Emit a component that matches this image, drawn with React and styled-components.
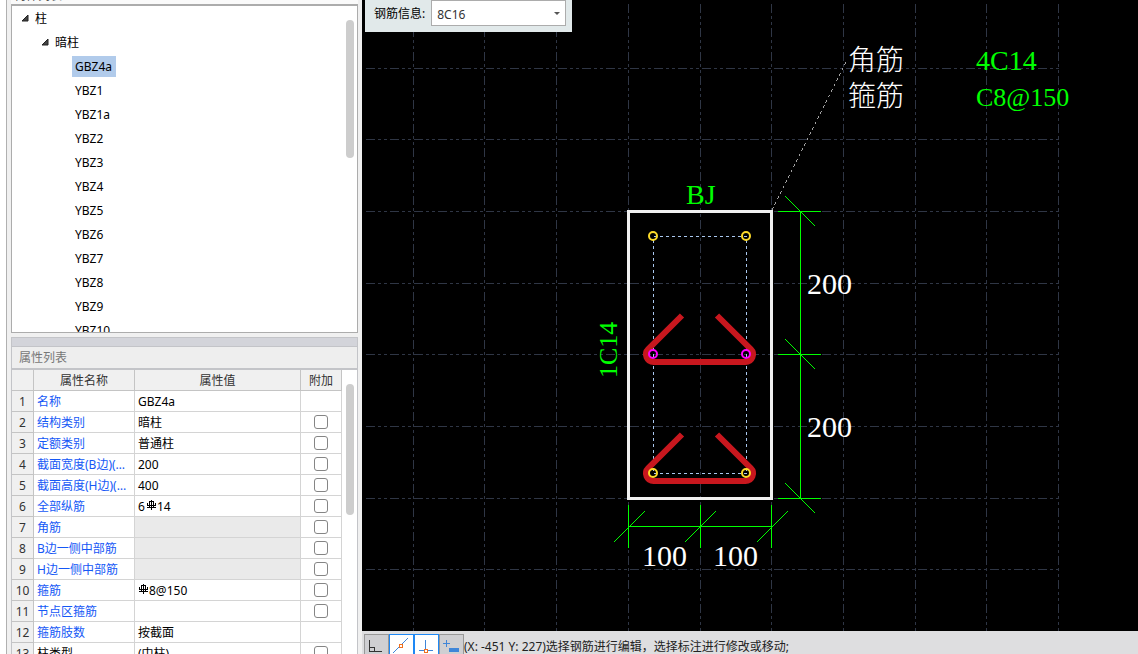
import React, { useState } from "react";
import styled, { createGlobalStyle } from "styled-components";

const GlobalStyle = createGlobalStyle`
  * {
    box-sizing: border-box;
  }

  body {
    margin: 0;
    overflow: hidden;
    font-family: "Noto Sans", "Noto Sans CJK SC", sans-serif;
    font-size: 12px;
    color: #000000;
  }

  button, select, input {
    margin: 0;
    font: inherit;
  }
`

const Page = styled.div`
  display: flex;
  height: 100vh;
  background-color: #f0f0f0;
`

const Edge = styled.div`
  width: 7px;
  background-color: #ffffff;
  border-right: 1px solid #b0b0b0;
`

const Sidebar = styled.aside`
  display: flex;
  flex: none;
  width: 362px;
`

const Column = styled.div`
  display: flex;
  flex-direction: column;
  gap: 4px;
  flex: 1;
  min-width: 0;
  padding: 0 4px;
`

const Upper = styled.section`
  display: flex;
  flex-direction: column;
  flex: 333 1 0;
  min-height: 0;
`

const Lower = styled.section`
  display: flex;
  flex-direction: column;
  flex: 317 1 0;
  min-height: 0;
`

const ClippedTitle = styled.div`
  display: flex;
  align-items: flex-end;
  flex: none;
  height: 4px;
  padding-left: 3px;
  overflow: hidden;
  line-height: 16px;
  color: #555555;
  background-color: #fafafa;
`

const TreeBox = styled.div`
  display: flex;
  flex: 1;
  min-height: 0;
  background-color: #ffffff;
  border: 1px solid #acacac;
  border-top-width: 2px;
`

const Tree = styled.ul`
  flex: 1;
  margin: 0;
  padding: 0;
  overflow: hidden;
  list-style-type: none;
`

const TreeItem = styled.li`
  display: flex;
  align-items: center;
  gap: 6px;
  height: 24px;
  padding-left: ${(props) => props.$indent}px;
`

const TreeLabel = styled.span`
  padding: 0 ${(props) => (props.$leaf ? 4 : 0)}px 0 ${(props) => (props.$leaf ? 3 : 0)}px;
  line-height: 21px;
  background-color: ${(props) => (props.$selected ? "#b1cbeb" : "transparent")};
`

const Track = styled.div`
  flex: none;
  width: 15px;
  padding: 14px 3px 0 4px;
  background-color: #ffffff;
`

const Thumb = styled.div`
  height: ${(props) => props.$size}px;
  border-radius: 4px;
  background-color: #cdcdcd;
`

const Splitter = styled.div`
  flex: none;
  height: 9px;
  background-color: #d3d4da;
  border: 1px solid #c3c4c8;
  border-bottom: none;
`

const ListTitle = styled.h2`
  flex: none;
  height: 22px;
  margin: 0;
  padding-left: 7px;
  font-size: 12px;
  font-weight: 400;
  line-height: 22px;
  color: #777777;
  background-color: #eeeeee;
  border: 1px solid #c3c4c8;
  border-bottom: none;
`

const TableBox = styled.div`
  display: flex;
  flex: 1;
  min-height: 0;
  overflow: hidden;
  background-color: #ffffff;
  border: 1px solid #c3c4c8;
  border-top-width: 2px;
  border-bottom: none;
`

const TableClip = styled.div`
  flex: 1;
  overflow: hidden;
`

const Table = styled.table`
  width: 100%;
  table-layout: fixed;
  border-collapse: separate;
  border-spacing: 0;
`

const HeadCell = styled.th`
  width: ${(props) => props.$width};
  height: 21px;
  padding: 2px 0 0;
  font-weight: 400;
  line-height: 18px;
  color: #333333;
  background-color: #f0f0f0;
  border-right: 1px solid #c4c4c4;
  border-bottom: 1px solid #c4c4c4;
`

const Cell = styled.td`
  height: 21px;
  padding: 2px 3px 0;
  overflow: hidden;
  line-height: 18px;
  white-space: nowrap;
  text-overflow: ellipsis;
  color: ${(props) => props.$color || "#000000"};
  background-color: ${(props) => (props.$locked ? "#eaeaea" : "#ffffff")};
  border-right: 1px solid #d4d4d4;
  border-bottom: 1px solid #d4d4d4;
`

const CheckCell = styled(Cell)`
  padding: 0;
  text-align: center;
`

const CheckBox = styled.input`
  appearance: none;
  display: block;
  width: 14px;
  height: 14px;
  margin: 0 auto;
  background-color: #ffffff;
  border: 1px solid #858585;
  border-radius: 3px;

  &:checked {
    background-color: #1e88f5;
  }
`

const Value = styled.span`
  display: flex;
  align-items: flex-start;
  gap: 1px;
`

const Work = styled.main`
  display: flex;
  flex-direction: column;
  flex: 1;
  min-width: 0;
`

const Stage = styled.div`
  position: relative;
  flex: 1;
  min-height: 0;
  overflow: hidden;
  background-color: #000000;
`

const Drawing = styled.svg`
  display: block;
  width: 100%;
  height: 100%;
`

const DrawText = styled.text`
  font-family: "Liberation Serif", "Noto Sans CJK SC", serif;
  font-size: ${(props) => props.$size || 30}px;
  font-weight: 300;
  fill: ${(props) => props.$color || "#ffffff"};
`

const InfoBar = styled.div`
  position: absolute;
  top: 0;
  left: 3px;
  display: flex;
  gap: 6px;
  height: 32px;
  padding: 0 6px 0 9px;
  line-height: 27px;
  background-color: #e1e9ea;
`

const SelectBox = styled.div`
  position: relative;
  width: 135px;
  height: 26px;
`

const Select = styled.select`
  appearance: none;
  width: 100%;
  height: 100%;
  padding: 0 5px;
  color: #333333;
  background-color: #ffffff;
  border: 1px solid #acacac;
  border-radius: 0;
`

const Arrow = styled.svg`
  position: absolute;
  top: 12px;
  right: 6px;
  pointer-events: none;
`

const StatusBar = styled.footer`
  display: flex;
  flex: none;
  height: 23px;
  padding: 3px 0 0 2px;
  overflow: hidden;
  line-height: 25px;
  color: #222222;
  background-color: #dedee0;
`

const ModeButton = styled.button`
  display: flex;
  align-items: flex-start;
  flex: none;
  width: 25px;
  height: 25px;
  padding: 0;
  background-color: ${(props) => (props.$active ? "#ffffff" : "#cfcfd2")};
  border: 1px solid ${(props) => (props.$active ? "#1e88f5" : "#989898")};
`

const StatusText = styled.span`
  white-space: nowrap;
`

const nodes = ["GBZ4a", "YBZ1", "YBZ1a", "YBZ2", "YBZ3", "YBZ4", "YBZ5", "YBZ6", "YBZ7", "YBZ8", "YBZ9", "YBZ10"];

const properties = [
  { name: "名称", value: "GBZ4a", noCheck: true },
  { name: "结构类别", value: "暗柱" },
  { name: "定额类别", value: "普通柱" },
  { name: "截面宽度(B边)(mm)", value: "200" },
  { name: "截面高度(H边)(mm)", value: "400" },
  { name: "全部纵筋", count: "6", steel: true, value: "14" },
  { name: "角筋", locked: true },
  { name: "B边一侧中部筋", locked: true },
  { name: "H边一侧中部筋", locked: true },
  { name: "箍筋", steel: true, value: "8@150" },
  { name: "节点区箍筋" },
  { name: "箍筋肢数", value: "按截面", noCheck: true },
  { name: "柱类型", value: "(中柱)", color: "#000000" },
];

const gridX = [51, 122, 194, 266, 338, 409, 481, 553, 624, 696];
const gridY = [68, 139, 211, 283, 354, 426, 498, 569];

const Expander = () => (
  <svg width="8" height="8" viewBox="0 0 8 8" aria-hidden="true">
    <path d="M7 1v6H1z" fill="#444444" stroke="#222222" strokeWidth="1" />
  </svg>
);

const SteelMark = () => (
  <svg width="10" height="14" viewBox="0 0 10 14" fill="none" stroke="#000000" shapeRendering="crispEdges" aria-label="HRB400">
    <path d="M5.5 2v10M1 9.5h9M3.5 4v5M7.5 4v5M3 3.5h5M1.5 5v2M9.5 5v2M1 7.5h9" strokeWidth="1" />
  </svg>
);

const Stirrup = ({ y }) => (
  <path
    d="M320 315.5L286.2 349.2A7.5 7.5 0 0 0 291.5 362H383.5A7.5 7.5 0 0 0 388.8 349.2L355 315.5"
    transform={`translate(0 ${y})`}
    fill="none"
    stroke="#c8171e"
    strokeWidth="6"
  />
);

const Bar = ({ x, y, color }) => (
  <circle cx={x} cy={y} r="4" fill="none" stroke={color} strokeWidth="2" />
);

const Section = () => (
  <Drawing>
    <g stroke="#2f3645" strokeDasharray="9 3 3 3 3 3" transform="translate(0.5 0.5)" shapeRendering="crispEdges">
      {gridX.map((x) => (
        <line key={x} x1={x} y1="3" x2={x} y2="630" />
      ))}
      {gridY.map((y) => (
        <line key={y} x1="3" y1={y} x2="696" y2={y} />
      ))}
    </g>

    <line x1="410" y1="210" x2="485" y2="60" stroke="#a0a0a0" strokeDasharray="3 3" shapeRendering="crispEdges" />

    <rect x="266.5" y="211.5" width="143" height="287" fill="none" stroke="#f0f0f0" strokeWidth="3" shapeRendering="crispEdges" />
    <path d="M291.5 236.5H384.5V473.5H291.5z" fill="none" stroke="#a9c7ee" strokeDasharray="3 3" shapeRendering="crispEdges" />

    <Stirrup y={0} />
    <Stirrup y={119} />

    <Bar x={291} y={236} color="#fddb2a" />
    <Bar x={384} y={236} color="#fddb2a" />
    <Bar x={291} y={354} color="#ff00ff" />
    <Bar x={384} y={354} color="#ff00ff" />
    <Bar x={291} y={473} color="#fddb2a" />
    <Bar x={384} y={473} color="#fddb2a" />

    {/* dimension lines */}
    <g stroke="#00ff00" fill="none" transform="translate(0.5 0.5)" shapeRendering="crispEdges">
      <path d="M438 211V498M415 211H458M415 354H458M415 498H458" />
      <path d="M423 196L453 226M423 339L453 369M423 483L453 513" />
      <path d="M266 526H409M266 504V547M338 504V547M409 504V547" />
      <path d="M251 542L282 511M322 542L353 511M394 542L425 511" />
    </g>

    <DrawText x="445" y="294">200</DrawText>
    <DrawText x="445" y="437">200</DrawText>
    <DrawText x="280" y="566">100</DrawText>
    <DrawText x="351" y="566">100</DrawText>
    <DrawText x="486" y="70" $size={28}>角筋</DrawText>
    <DrawText x="486" y="106" $size={28}>箍筋</DrawText>
    <DrawText x="614" y="70" $size={28} $color="#00ff00">4C14</DrawText>
    <DrawText x="614" y="106" $size={26} $color="#00ff00">C8@150</DrawText>
    <DrawText x="324" y="204" $size={28} $color="#00ff00">BJ</DrawText>
    <DrawText transform="translate(255 378) rotate(-90)" $size={26} $color="#00ff00">1C14</DrawText>
  </Drawing>
);

const App = () => {
  const [selected, setSelected] = useState("GBZ4a");

  return (
    <Page>
      <GlobalStyle />
      <Sidebar>
        <Edge />
        <Column>
          <Upper>
            <ClippedTitle>构件列表</ClippedTitle>
            <TreeBox>
              <Tree>
                <TreeItem $indent={9}>
                  <Expander />
                  <TreeLabel>柱</TreeLabel>
                </TreeItem>
                <TreeItem $indent={29}>
                  <Expander />
                  <TreeLabel>暗柱</TreeLabel>
                </TreeItem>
                {nodes.map((node) => (
                  <TreeItem key={node} $indent={60} onClick={() => setSelected(node)}>
                    <TreeLabel $leaf $selected={node === selected}>{node}</TreeLabel>
                  </TreeItem>
                ))}
              </Tree>
              <Track>
                <Thumb $size={138} />
              </Track>
            </TreeBox>
          </Upper>
          <Lower>
            <Splitter />
            <ListTitle>属性列表</ListTitle>
            <TableBox>
              <TableClip>
                <Table>
                  <thead>
                    <tr>
                      <HeadCell $width="22px" aria-label="序号" />
                      <HeadCell $width="101px">属性名称</HeadCell>
                      <HeadCell $width="auto">属性值</HeadCell>
                      <HeadCell $width="41px">附加</HeadCell>
                    </tr>
                  </thead>
                  <tbody>
                    {properties.map((item, index) => (
                      <tr key={item.name}>
                        <HeadCell>{index + 1}</HeadCell>
                        <Cell $color={item.color || "#1558f6"}>{item.name}</Cell>
                        <Cell $locked={item.locked}>
                          <Value>
                            {item.count}
                            {item.steel && <SteelMark />}
                            {item.value}
                          </Value>
                        </Cell>
                        <CheckCell>
                          {!item.noCheck && <CheckBox type="checkbox" aria-label={item.name} />}
                        </CheckCell>
                      </tr>
                    ))}
                  </tbody>
                </Table>
              </TableClip>
              <Track>
                <Thumb $size={131} />
              </Track>
            </TableBox>
          </Lower>
        </Column>
      </Sidebar>

      <Work>
        <Stage>
          <Section />
          <InfoBar>
            <label htmlFor="steel">钢筋信息:</label>
            <SelectBox>
              <Select id="steel" defaultValue="8C16">
                <option>8C16</option>
              </Select>
              <Arrow width="6" height="4" viewBox="0 0 6 4">
                <path d="M0 0h6L3 3z" fill="#555555" />
              </Arrow>
            </SelectBox>
          </InfoBar>
        </Stage>
        <StatusBar>
          <ModeButton type="button" aria-label="正交">
            <svg width="23" height="23" fill="none" stroke="#333333" shapeRendering="crispEdges">
              <path d="M4.5 5v12M4 16.5h13M5 12.5h4.5v4" />
            </svg>
          </ModeButton>
          <ModeButton type="button" $active aria-label="中点">
            <svg width="23" height="23" fill="none" stroke="#3f86d8">
              <path d="M3 18L18 3" />
              <rect x="9.5" y="9.5" width="3" height="3" fill="#ffffff" stroke="#f07020" />
            </svg>
          </ModeButton>
          <ModeButton type="button" $active aria-label="垂点">
            <svg width="23" height="23" fill="none" stroke="#3f86d8">
              <path d="M10.5 5v11M4 15.5h14" />
              <rect x="9.5" y="14.5" width="3" height="3" fill="#ffffff" stroke="#f07020" />
            </svg>
          </ModeButton>
          <ModeButton type="button" aria-label="动态输入">
            <svg width="23" height="23" fill="none" stroke="#3f86d8">
              <path d="M3 8.5h7M6.5 5v7" />
              <rect x="9" y="13" width="10" height="4" fill="#3f86d8" stroke="none" />
            </svg>
          </ModeButton>
          <StatusText>(X: -451 Y: 227)选择钢筋进行编辑，选择标注进行修改或移动;</StatusText>
        </StatusBar>
      </Work>
    </Page>
  );
};

export default App;
